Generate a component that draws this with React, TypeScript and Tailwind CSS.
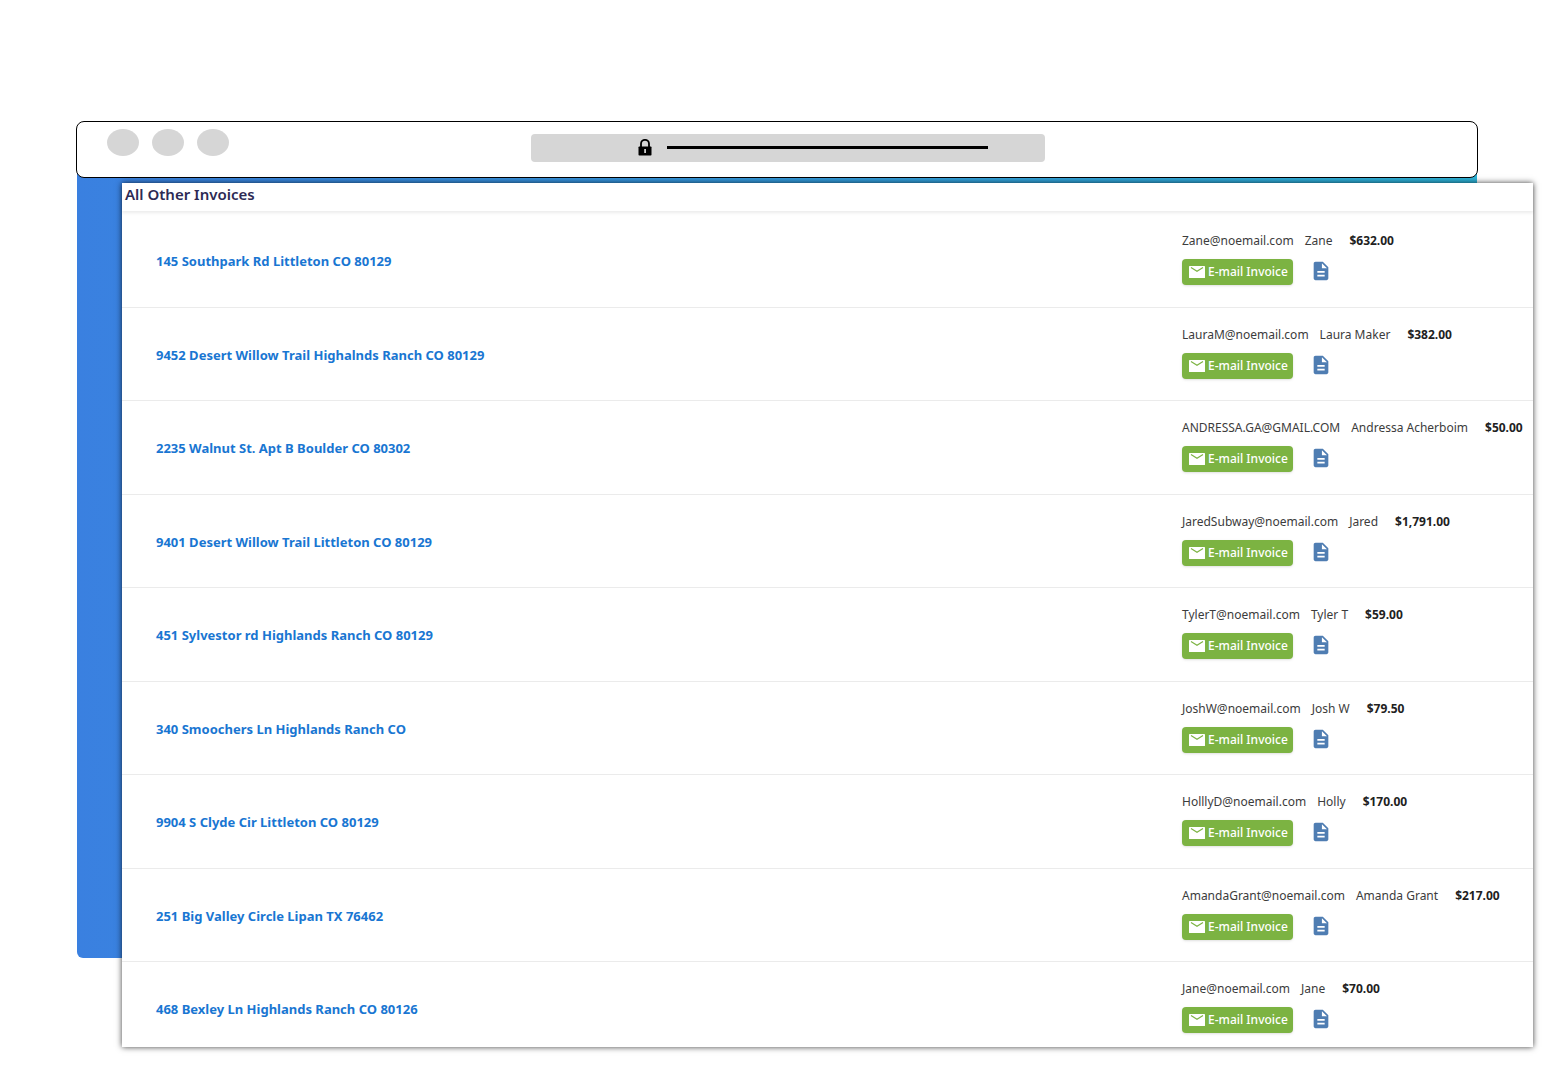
import { MdDescription } from "react-icons/md"

interface Invoice {
  id: number
  address: string
  email: string
  name: string
  amount: string
}

const INVOICES: Invoice[] = [
  { id: 1, address: "145 Southpark Rd Littleton CO 80129", email: "Zane@noemail.com", name: "Zane", amount: "$632.00" },
  { id: 2, address: "9452 Desert Willow Trail Highalnds Ranch CO 80129", email: "LauraM@noemail.com", name: "Laura Maker", amount: "$382.00" },
  { id: 3, address: "2235 Walnut St. Apt B Boulder CO 80302", email: "ANDRESSA.GA@GMAIL.COM", name: "Andressa Acherboim", amount: "$50.00" },
  { id: 4, address: "9401 Desert Willow Trail Littleton CO 80129", email: "JaredSubway@noemail.com", name: "Jared", amount: "$1,791.00" },
  { id: 5, address: "451 Sylvestor rd Highlands Ranch CO 80129", email: "TylerT@noemail.com", name: "Tyler T", amount: "$59.00" },
  { id: 6, address: "340 Smoochers Ln Highlands Ranch CO", email: "JoshW@noemail.com", name: "Josh W", amount: "$79.50" },
  { id: 7, address: "9904 S Clyde Cir Littleton CO 80129", email: "HolllyD@noemail.com", name: "Holly", amount: "$170.00" },
  { id: 8, address: "251 Big Valley Circle Lipan TX 76462", email: "AmandaGrant@noemail.com", name: "Amanda Grant", amount: "$217.00" },
  { id: 9, address: "468 Bexley Ln Highlands Ranch CO 80126", email: "Jane@noemail.com", name: "Jane", amount: "$70.00" },
]

function EnvelopeIcon() {
  return (
    <svg viewBox="0 0 16 12" className="w-4 h-3 shrink-0" aria-hidden="true">
      <rect width="16" height="12" rx="0.6" fill="#fff" />
      <path d="M2 1.6 8 5.2l6-3.6" fill="none" stroke="#7cb342" strokeWidth="1.2" />
    </svg>
  )
}

function LockIcon() {
  return (
    <svg viewBox="0 0 14 17" className="w-3.5 h-[17px]" aria-hidden="true">
      <path d="M3 8V4.8a4 4 0 0 1 8 0V8" fill="none" stroke="#000" strokeWidth="1.8" />
      <rect x="0.5" y="7.5" width="13" height="9" rx="0.8" fill="#000" />
      <rect x="6.2" y="10" width="1.8" height="4" fill="#ccc" />
    </svg>
  )
}

function BrowserBar() {
  return (
    <div className="relative h-[57px] grid grid-cols-[454fr_514fr_432fr] items-start bg-white border border-black rounded-lg">
      <div className="flex gap-[13px] pl-[30px] pt-[7px]">
        <span className="w-8 h-[27px] rounded-[50%] bg-[#d6d6d6]" />
        <span className="w-8 h-[27px] rounded-[50%] bg-[#d6d6d6]" />
        <span className="w-8 h-[27px] rounded-[50%] bg-[#d6d6d6]" />
      </div>
      <div className="mt-3 h-7 flex items-center gap-[15px] pb-px pl-[107px] pr-[57px] rounded bg-[#d6d6d6]">
        <LockIcon />
        <span className="h-[3px] flex-1 bg-black" />
      </div>
    </div>
  )
}

function InvoiceRow({ invoice }: { invoice: Invoice }) {
  return (
    <li className="h-[94px] even:h-[93px] last:h-[85px] flex items-start pl-[34px] border-b border-[#ebebeb] last:border-b-0">
      <div className="flex-1 pt-[37px]">
        <a href={`#invoice-${invoice.id}`} className="block w-fit text-[13px] leading-5 font-bold text-[#1976d2]">
          {invoice.address}
        </a>
      </div>
      <div className="w-[351px] shrink-0 pt-[17px] whitespace-nowrap">
        <div className="flex text-xs leading-5 text-[#3c3c3c]">
          <span>{invoice.email}</span>
          <span className="ml-[11px]">{invoice.name}</span>
          <span className="ml-[17px] font-bold text-[#212121]">{invoice.amount}</span>
        </div>
        <div className="mt-2 flex items-start gap-[17px]">
          <button
            type="button"
            className="h-[26px] flex items-center gap-[3px] pl-[7px] pr-[5px] rounded bg-[#7cb342] text-xs font-medium text-white shadow-sm"
          >
            <EnvelopeIcon />
            E-mail Invoice
          </button>
          <button type="button" aria-label="View invoice" className="pt-px text-[#4f7db2]">
            <MdDescription size={22} />
          </button>
        </div>
      </div>
    </li>
  )
}

export default function App() {
  return (
    <div className="bg-white pt-[121px] pl-[76px] pr-[75px] pb-8 overflow-hidden font-['Noto_Sans',sans-serif]">
      <BrowserBar />
      <div className="grid">
        <div className="col-start-1 row-start-1 -mt-2 mb-[89px] mx-px rounded-b-md bg-linear-to-r from-[#3a80e0] to-[#2db3d8]" />
        <main className="relative col-start-1 row-start-1 mt-[5px] ml-[46px] -mr-[55px] bg-white shadow-[0_0_6px_rgba(0,0,0,0.75)]">
          <h1 className="h-7 pl-[3px] text-[15px] leading-[22px] font-semibold text-[#2d2a54] shadow-[0_2px_3px_rgba(0,0,0,0.08)]">
            All Other Invoices
          </h1>
          <ul className="pt-[3px]">
            {INVOICES.map((invoice) => (
              <InvoiceRow key={invoice.id} invoice={invoice} />
            ))}
          </ul>
        </main>
      </div>
    </div>
  )
}
